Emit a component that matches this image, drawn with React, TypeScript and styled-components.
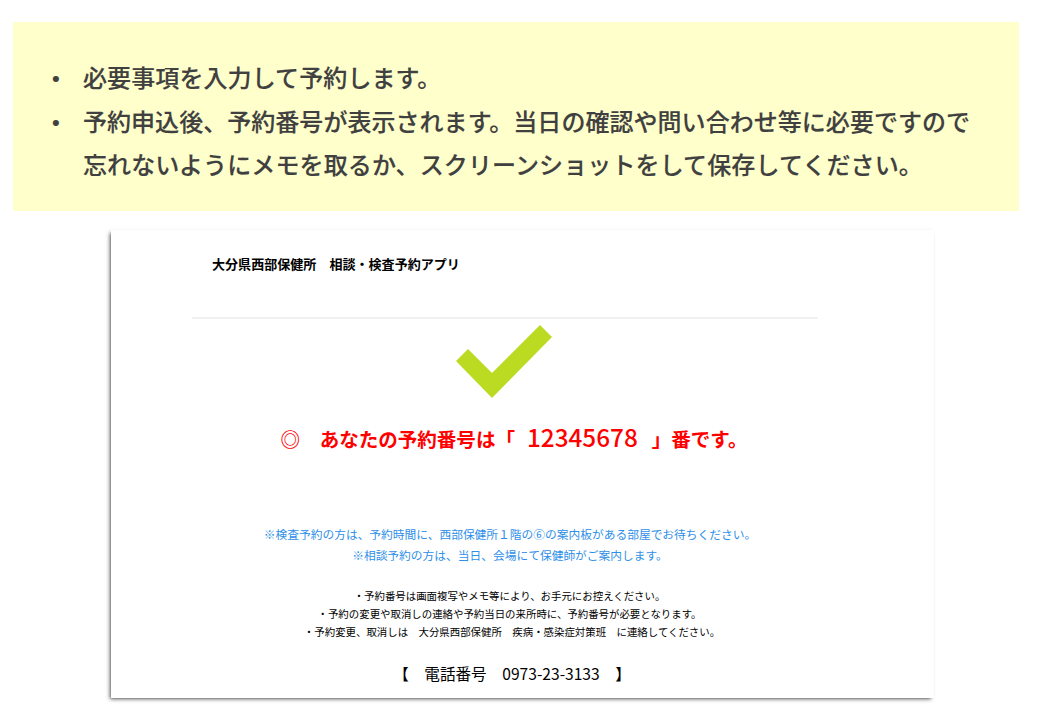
import React from "react";
import styled, { createGlobalStyle } from "styled-components";

const Global = createGlobalStyle`
  * { box-sizing: border-box; }
  body { margin: 0; background: #fff; font-family: "Noto Sans CJK JP", sans-serif; overflow: hidden; }
`;
const Page = styled.main`width: 1040px; height: 720px; padding: 22px 0 0 13px;`;
const Notice = styled.section`width: 1006px; height: 189px; background: #ffffcc; padding: 33px 0 0 39px;`;
const List = styled.ul`margin: 0; padding: 0; list-style: none;`;
const Item = styled.li`display: flex; color: #404040; font-size: 24px; font-weight: 500; line-height: 43.5px; white-space: nowrap; -webkit-text-stroke: 0.15px #404040;`;
const Bullet = styled.span`width: 31px; padding-top: 2px; height: 43px; font-family: "Liberation Sans", sans-serif; font-size: 22px;`;
const Sentence = styled.span<{ $track: number }>`display: block; letter-spacing: ${p => p.$track}px;`;
const Card = styled.section`
  width: 823px; height: 468px; margin: 19px 0 0 98px; background: #fff;
  box-shadow: -2px 2px 4px -1px rgba(0,0,0,.65), -1px 1px 1px -1px rgba(0,0,0,.3);
  display: flex; flex-direction: column; align-items: center;
`;
const Header = styled.header`width: 626px; height: 89px; margin-right: 35px; padding: 23px 0 0 20px; border-bottom: 2px solid #f0f0f0;`;
const Title = styled.h1`margin: 0; font-size: 13.05px; line-height: 22px; font-weight: 700;`;
const Check = styled.svg`width: 96px; height: 74px; margin: 6px 37px 0 0; flex: none;`;
const Line = styled.p<{ $size: number; $h: number; $top?: number; $color?: string; $bold?: boolean; $shift?: number }>`
  margin: ${p => p.$top ?? 0}px ${p => p.$shift ?? 0}px 0 0;
  font-size: ${p => p.$size}px; line-height: ${p => p.$h}px;
  color: ${p => p.$color ?? "#000"}; font-weight: ${p => (p.$bold ? 700 : 400)}; white-space: pre;
`;
const Num = styled.span`font-size: 24.3px; font-weight: 500; margin: 0 14px 0 12px;`;

export default function App() {
  return (
    <Page>
      <Global />
      <Notice>
        <List>
          <Item><Bullet>•</Bullet><Sentence $track={0.1}>必要事項を入力して予約します。</Sentence></Item>
          <Item>
            <Bullet>•</Bullet>
            <div>
              <Sentence $track={0.04}>予約申込後、予約番号が表示されます。当日の確認や問い合わせ等に必要ですので</Sentence>
              <Sentence $track={0.12}>忘れないようにメモを取るか、スクリーンショットをして保存してください。</Sentence>
            </div>
          </Item>
        </List>
      </Notice>
      <Card>
        <Header><Title>大分県西部保健所　相談・検査予約アプリ</Title></Header>
        <Check viewBox="0 0 96 74"><path d="M0 36 12 24 36 48 84 0 96 12 36 73Z" fill="#badb22" /></Check>
        <Line $size={19.55} $h={36} $top={20} $color="#f00" $bold $shift={17}>◎　あなたの予約番号は「<Num>12345678</Num>」番です。</Line>
        <Line $size={11.74} $h={21} $top={66} $color="#2f8fe8" $shift={25}>※検査予約の方は、予約時間に、西部保健所１階の⑥の案内板がある部屋でお待ちください。</Line>
        <Line $size={11.74} $h={21} $color="#2f8fe8" $shift={25}>※相談予約の方は、当日、会場にて保健師がご案内します。</Line>
        <Line $size={10.43} $h={18.2} $top={22} $shift={26}>・予約番号は画面複写やメモ等により、お手元にお控えください。</Line>
        <Line $size={10.43} $h={18.2} $shift={26}>・予約の変更や取消しの連絡や予約当日の来所時に、予約番号が必要となります。</Line>
        <Line $size={10.43} $h={18.2} $shift={21}>・予約変更、取消しは　大分県西部保健所　疾病・感染症対策班　に連絡してください。</Line>
        <Line $size={15.6} $h={28} $top={17.4} $shift={21}>【　電話番号　0973-23-3133　】</Line>
      </Card>
    </Page>
  );
}
